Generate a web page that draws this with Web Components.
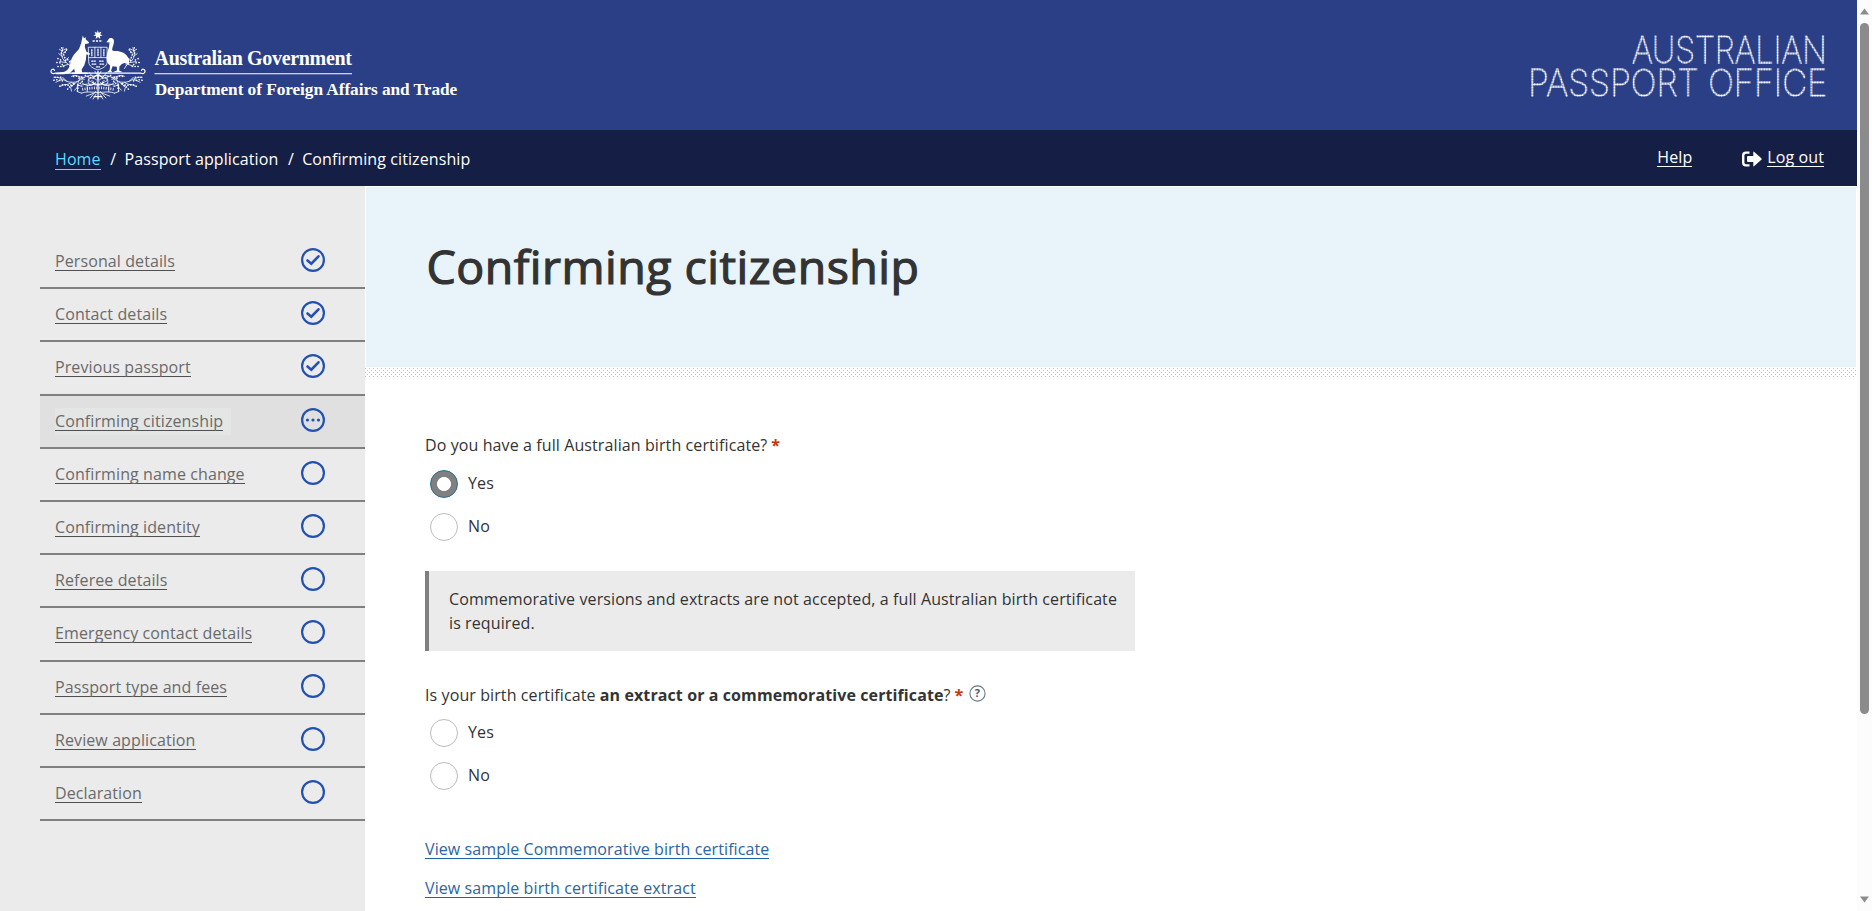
<!DOCTYPE html>
<html lang="en">
<head>
<meta charset="utf-8">
<title>Confirming citizenship</title>
<style>
html,body{margin:0;height:100%;overflow:hidden;background:#fff}
body{font:16px/24px "Open Sans","Noto Sans",sans-serif;letter-spacing:.1px;color:#333}
</style>
</head>
<body>
<passport-page></passport-page>
<script>
const define = (name, html, setup) => {
  const t = document.createElement('template');
  t.innerHTML = html;
  customElements.define(name, class extends HTMLElement {
    constructor() {
      super();
      this.attachShadow({mode: 'open'}).append(t.content.cloneNode(true));
    }
    connectedCallback() { if (setup) setup(this, this.shadowRoot); }
  });
};

define('coat-of-arms', `
<style>:host{display:block;width:98px;height:72px}svg{display:block}</style>
<svg width="96" height="71" viewBox="0 0 98 72" preserveAspectRatio="none" fill="none" stroke="#fff" stroke-linecap="round" stroke-linejoin="round">
  <path fill="#fff" stroke="none" d="M48.700 0l1.100 2.700 2.800-1-1.300 2.600 2.500 1.400-2.800.5.300 2.900-2.300-1.900-2.300 1.900.3-2.900-2.800-.5 2.500-1.400-1.300-2.600 2.800 1z"/>
  <path stroke-width="1.500" stroke-dasharray="2.200 1.200" stroke-linecap="butt" d="M43.500 11.200h10.300"/>
  <path fill="#fff" stroke="none" d="M33.500 5.500l1.200 3 1.600-1.400.3 2.600 3.300 2.700-.7 1.400-3.300.3-.4 3.200 1.700 4.700 3.500 1.700-.4 1.600-3.200-.5-.5 5.500-1.600 5.500-2.700 4.200.5 3.200h5.500l1 1.500H22.300l.4-1.500h2.800l-.8-4-4.300 4.500-6.200 1.100H6v-1.300l7.700-.9c4.600-1.200 6.600-5.200 7.500-10.200 1-6.200 5.200-9.400 8.400-13.200l2.200-5.700z"/>
  <path fill="#fff" stroke="none" d="M59.500 10c.3-2.200 4.700-2.700 5.600.1 1 3.600-1.800 6.800-1.600 10.500 2.300 1.500 6.900-.2 12.200 3.100 4.600 3 5.800 8 4.700 11.500l-3.800-2-3.300 1.400-2.400 2.300-.3 4.100 3.800 1.800H64l4.500-1.900-.3-3.600-4.300-.6-1.600 4.400 1.300 1.700h-5.300l2.600-2.200.5-4.500c-4.500-3.400-4-9-2.700-13.600l1.500-5.300.6-4.600-3.300-.3z"/>
  <path stroke-width=".8" d="M39.500 17.500h18.800v15c0 4.500-5 6.500-9.400 8-4.400-1.500-9.400-3.500-9.400-8zM39.500 28h18.800M45.800 17.500V28M52 17.500V28"/>
  <path stroke-width="1.300" stroke-dasharray="1.300 1.200" d="M42.700 20v6M49 19.500v7M55 20v6M42.500 31.500h4M50.500 31.500h5M43 34.500h4M51 34.500h4M47.500 37.500h3"/>
  <path stroke-width="1.200" d="M1.500 40.500C0 43 2.500 45 5 43.800h88c2.500 1.200 5-1 3.500-3.300M1 42c0-2.500 3-3 3.500-1M97 42c0-2.500-3-3-3.500-1"/>
  <g id="half" stroke-width=".8">
    <path d="M22 39c-2-5-7-6-9-10-1.500-4-2-7 .5-11M13 27l-4-3M13 24l4-3.500M15 31l4-3M16 33l-6-1M18 35l-5 1.500M12 21l-2.500-1.500M20 36l1-5M14 20l3-1"/>
    <path stroke-width="1.600" stroke-dasharray=".2 2.800" d="M12 18l1 4-3 3M17 20l-3 5 2 6M7 33c4-1 5 3 8 3M8 37h6M18 30l3 3M8 29l4 2"/>
    <path d="M46 47C34 43 33 54 22 53 15 53 12 47 4 48M40 48c-2 4 2 6 3 3M35 48c-5 1-8-4-13-1M22 53c-5 4-7 1-11 4M30 50c-3 5 0 8-5 11M17 52l-4-4M12 50l-6 3M27 53l-6 5 1 4M35 50l-6-1M48 51c-7-6-11 0-8 4 3 2 6-1 4-3M47 53c-5 6-12 3-15 0"/>
    <path stroke-width="1.600" stroke-dasharray=".2 2.700" d="M4 51c4-2 7 2 11 0M10 57c5-4 9 2 14-3M18 60c2-4 7-3 7-7M24 47c3-2 6 3 10 0M28 62l1-6 4-4M5 48h6M36 46l7 3"/>
    <path d="M28 55.500l5 2M28 55.500v7l4 1.500M32 56c6-2 10-1 17 0M32 64c5-2 10-1 17-.5M38 56.500v6M47 62l-6 7M45 64l-8 3M47 65l-3 5M44 48l-4-5M49 42v8M46 42l3 5"/>
  </g>
  <use href="#half" transform="matrix(-1 0 0 1 98 0)"/>
  <path stroke-width="2.700" stroke-dasharray=".9 1.500" stroke-linecap="butt" d="M33 60.300c10-2.200 22-2.200 32 0"/>
  <path stroke-width="1.200" d="M49 48v22M45 67.500h8M43 53c3 3 9 3 12 0M44 49c2-4 8-4 10 0"/>
</svg>`);

define('gov-brand', `
<style>:host{display:flex;align-items:flex-start;letter-spacing:0}coat-of-arms{flex:none}
svg{display:block;margin-left:6px}text{font-family:"Liberation Serif",serif;font-weight:700;fill:#fff}</style>
<coat-of-arms></coat-of-arms>
<svg width="310" height="75" viewBox="0 0 310 75">
  <text x=".5" y="34.700" font-size="20" textLength="197.500">Australian Government</text>
  <rect x=".5" y="43" width="197.500" height="1.300" fill="#cdd3e6"/>
  <text x=".7" y="65" font-size="17.300" textLength="302.500">Department of Foreign Affairs and Trade</text>
</svg>`);

define('office-mark', `
<style>:host{display:block;width:300px;height:75px;letter-spacing:0}svg{display:block;overflow:visible}
text{font-family:Inter,"Lato",sans-serif;font-weight:100;fill:url(#dots);stroke:url(#dots);stroke-width:1.300px}</style>
<svg width="300" height="75" viewBox="0 0 300 75">
  <defs><pattern id="dots" width="2.670" height="2.670" patternUnits="userSpaceOnUse">
    <rect width="2.670" height="2.670" fill="#fff" fill-opacity=".18"/>
    <circle cx="1.330" cy="1.330" r="1.050" fill="#fff"/>
  </pattern></defs>
  <text x="104" y="32.500" font-size="36.200" textLength="195" lengthAdjust="spacingAndGlyphs">AUSTRALIAN</text>
  <text x="0" y="66" font-size="36.200" textLength="299" lengthAdjust="spacingAndGlyphs">PASSPORT OFFICE</text>
</svg>`);

define('site-header', `
<style>:host{display:flex;justify-content:space-between;align-items:flex-start;height:130px;box-sizing:border-box;background:#2b3f86;padding:30px 29px 0 50px}</style>
<gov-brand></gov-brand><office-mark></office-mark>`);

define('nav-bar', `
<style>
:host{display:flex;justify-content:space-between;height:56px;box-sizing:border-box;background:#151e44;color:#fff;padding:15px 33px 0 55px}
nav{display:flex}
a{height:21px;line-height:24px;border-bottom:1px solid #fff;white-space:nowrap}
.crumbs{padding-top:2px}.crumbs a{color:#61daff;border-color:#61daff;height:22px}
i{font-style:normal;margin:0 8.200px 0 9.700px}
.tools{gap:50px}.out{display:flex;gap:5px}.out svg{margin-top:6px}
</style>
<nav class="crumbs"><a>Home</a><i>/</i><span>Passport application</span><i>/</i><span>Confirming citizenship</span></nav>
<nav class="tools"><a>Help</a><div class="out">
<svg width="20" height="16" viewBox="0 0 20 16"><path d="M7.500 1.600H4Q1.200 1.600 1.200 4.400v7.200q0 2.800 2.800 2.800h3.500" fill="none" stroke="#fff" stroke-width="2.400"/><path fill="#fff" d="M6 5h5.300V1.200q0-1.200 1-.3l7 6.300q.8.800 0 1.600l-7 6.300q-1 .9-1-.3V11H6q-1 0-1-1V6q0-1 1-1z"/></svg>
<a>Log out</a></div></nav>`);

define('step-item', `
<style>
:host{display:flex;justify-content:space-between;align-items:flex-start;height:53.200px;box-sizing:border-box;border-bottom:2px solid #808080;padding:12px 40px 0 15px;color:#6a6a6a}
:host([state=current]){background:#e0e0e0}
span{display:block;height:27px;padding-right:8px}
:host([state=current]) span{background:#e3e6e5}
a{display:block;height:22px;line-height:27px;border-bottom:1px solid #505050;white-space:nowrap}
svg{display:block;flex:none}
</style>
<span><a><slot></slot></a></span>
<svg width="24" height="24" viewBox="0 0 24 24"><circle cx="12" cy="12" r="10.900" fill="none" stroke="#2351b2" stroke-width="2.200"/></svg>`,
(el, root) => {
  const marks = {
    done: '<path d="M6.500 12.500l3.800 3.200 7.200-7.400" fill="none" stroke="#2351b2" stroke-width="2.600" stroke-linecap="round"/>',
    current: '<g fill="#2351b2"><circle cx="6.500" cy="12" r="1.600"/><circle cx="12" cy="12" r="1.600"/><circle cx="17.500" cy="12" r="1.600"/></g>'
  };
  root.querySelector('svg').insertAdjacentHTML('beforeend', marks[el.getAttribute('state')] || '');
});

define('step-list', `
<style>:host{display:block;width:365px;flex:none;box-sizing:border-box;background:#ebebeb;padding:50px 0 0 40px}</style><slot></slot>`);

define('page-banner', `
<style>:host{display:block}
.b{height:180px;margin:0 1px;background:#e8f4f9;box-sizing:border-box;padding:51px 0 0 60.500px}
h1{margin:0;font-size:46.500px;line-height:56px;font-weight:500;letter-spacing:.480px;color:#333;-webkit-text-stroke:1.200px #333;white-space:nowrap}
.d{display:block}</style>
<div class="b"><h1><slot></slot></h1></div>
<svg class="d" width="100%" height="10"><defs><pattern id="p" width="4" height="4" patternUnits="userSpaceOnUse" y="1"><rect width="1" height="1" fill="#bdbdbd"/><rect x="2" y="2" width="1" height="1" fill="#bdbdbd"/></pattern></defs><rect y="1" width="100%" height="9" fill="url(#p)"/></svg>`);

define('radio-option', `
<style>:host{display:flex;height:28px;margin:0 0 15px 5px;gap:10px}
b{width:28px;height:28px;box-sizing:border-box;border:1px solid #bcbcbc;border-radius:50%;background:#fff}
:host([checked]) b{border-color:#1d6c8c;background:radial-gradient(circle,#fff 6.600px,#808080 7.300px)}
span{line-height:27px}</style>
<b></b><span><slot></slot></span>`);

define('form-question', `
<style>:host{display:block}p{margin:0 0 13px;height:24px;display:flex}
em{font-style:normal;font-weight:700;color:#c8370a;margin-left:4px}</style>
<p><span><slot name="label"></slot></span><em>*</em><slot name="help"></slot></p><slot></slot>`);

define('help-icon', `
<style>:host{display:block;margin:2px 0 0 5.500px}svg{display:block}text{font:700 11px "Open Sans",sans-serif;fill:#475569}</style>
<svg width="17" height="17"><circle cx="8.500" cy="8.500" r="7.600" fill="none" stroke="#6b7785" stroke-width="1.100"/><text x="8.500" y="12.400" text-anchor="middle">?</text></svg>`);

define('info-note', `
<style>:host{display:block;width:710px;height:80px;box-sizing:border-box;border-left:4px solid #808080;background:#ebebeb;padding:16px 16px 0 20px}</style><slot></slot>`);

define('text-link', `
<style>:host{display:block;height:39px;color:#2a66a2}a{display:inline-block;height:21px;border-bottom:1px solid #1a64a5;white-space:nowrap}</style><a><slot></slot></a>`);

define('scroll-rail', `
<style>:host{display:flex;flex-direction:column;width:15px;height:911px;flex:none;background:#fcfcfc;align-items:center}
svg{display:block;margin:8px 0}i{width:9px;height:691px;border-radius:5px;background:#8b8b8b;margin-bottom:174px}.dn{margin:8px 0 0}</style>
<svg width="9" height="7"><path d="M4.500 0.500L9 6.500H0z" fill="#8b8b8b"/></svg><i></i>
<svg class="dn" width="9" height="7"><path d="M4.500 6.500L9 .5H0z" fill="#8b8b8b"/></svg>`);

define('passport-page', `
<style>
:host{display:flex;height:911px;overflow:hidden}
.page{width:1857px;flex:none}
.body{display:flex;height:725px}
main{flex:1;padding-top:1px}
.form{padding:56px 0 0 60px}
info-note{margin:30px 0 32px}
.second{margin-bottom:-1px}
.second radio-option{position:relative;top:-1px}
.links{padding-top:32px}
</style>
<div class="page">
<site-header></site-header><nav-bar></nav-bar>
<div class="body">
<step-list>
<step-item state="done">Personal details</step-item>
<step-item state="done">Contact details</step-item>
<step-item state="done">Previous passport</step-item>
<step-item state="current">Confirming citizenship</step-item>
<step-item>Confirming name change</step-item>
<step-item>Confirming identity</step-item>
<step-item>Referee details</step-item>
<step-item>Emergency contact details</step-item>
<step-item>Passport type and fees</step-item>
<step-item>Review application</step-item>
<step-item>Declaration</step-item>
</step-list>
<main>
<page-banner>Confirming citizenship</page-banner>
<div class="form">
<form-question><span slot="label">Do you have a full Australian birth certificate?</span>
<radio-option checked>Yes</radio-option><radio-option>No</radio-option></form-question>
<info-note>Commemorative versions and extracts are not accepted, a full Australian birth certificate is required.</info-note>
<form-question class="second"><span slot="label">Is your birth certificate <strong>an extract or a commemorative certificate</strong>?</span><help-icon slot="help"></help-icon>
<radio-option>Yes</radio-option><radio-option>No</radio-option></form-question>
<div class="links"><text-link>View sample Commemorative birth certificate</text-link><text-link>View sample birth certificate extract</text-link></div>
</div>
</main>
</div>
</div>
<scroll-rail></scroll-rail>`);
</script>
</body>
</html>
